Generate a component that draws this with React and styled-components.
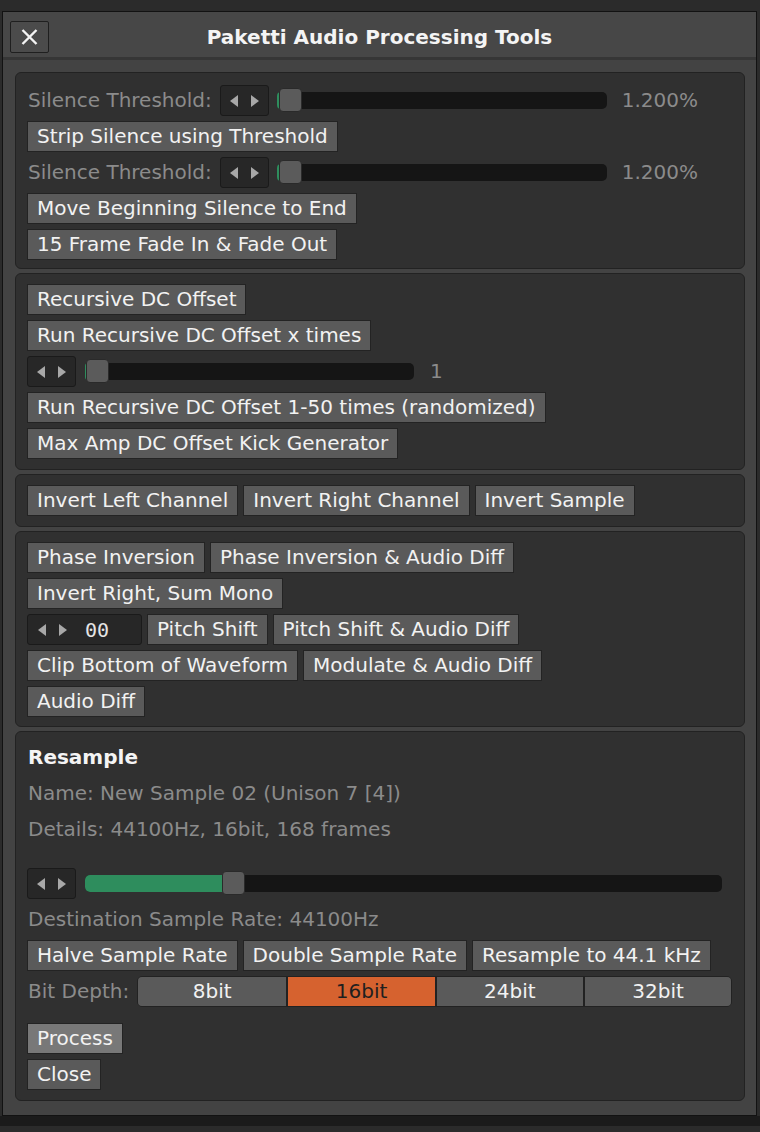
import React from "react";
import styled, { createGlobalStyle } from "styled-components";

const GlobalStyle = createGlobalStyle`
  body {
    margin: 0;
    background: #2b2b2b;
    font-family: "DejaVu Sans", "Liberation Sans", sans-serif;
  }
`;

const Page = styled.div`
  width: 760px;
  height: 1132px;
  padding-top: 11px;
  box-sizing: border-box;
  overflow: hidden;
`;

const Window = styled.div`
  width: 755px;
  margin-left: 2px;
  box-sizing: border-box;
  border: 1px solid #121212;
  background: #434343;
`;

const BottomShade = styled.div`
  height: 10px;
  background: #1b1b1b;
`;

const TitleBar = styled.div`
  height: 48px;
  box-sizing: border-box;
  display: grid;
  grid-template-columns: 1fr auto 1fr;
  align-items: center;
  padding: 4px 7px 0;
  background: #474747;
  border-bottom: 3px solid #363636;
`;

const CloseX = styled.button`
  width: 39px;
  height: 32px;
  padding: 0;
  display: flex;
  align-items: center;
  justify-content: center;
  background: #4b4b4b;
  border: 1px solid #1f1f1f;
  border-radius: 2px;
`;

const Title = styled.div`
  font-size: 20px;
  font-weight: bold;
  color: #f4f4f4;
  white-space: nowrap;
`;

const Body = styled.div`
  display: flex;
  flex-direction: column;
  gap: 4px;
  padding: 12px 11px 14px 12px;
`;

const Panel = styled.div`
  display: flex;
  flex-direction: column;
  align-items: flex-start;
  gap: 5px;
  padding: ${(p) => p.$pad || "10px 11px"};
  background: #303030;
  border: 1px solid #222222;
  border-radius: 6px;
`;

const Row = styled.div`
  display: flex;
  align-items: center;
  gap: ${(p) => p.$gap || 5}px;
`;

const Button = styled.button`
  height: 31px;
  box-sizing: border-box;
  padding: 0 9px;
  font-family: "DejaVu Sans", "Liberation Sans", sans-serif;
  font-size: 20px;
  line-height: 29px;
  color: #f2f2f2;
  white-space: nowrap;
  background: ${(p) => (p.$light ? "#787878" : "#5a5a5a")};
  border: 1px solid #232323;
  border-radius: 0;
`;

const Label = styled.div`
  height: 31px;
  line-height: 31px;
  padding-left: 1px;
  font-size: 20px;
  color: #8b8b8b;
  white-space: nowrap;
`;

const Heading = styled(Label)`
  font-weight: bold;
  color: #f4f4f4;
`;

const Spacer = styled.div`
  height: ${(p) => p.$h}px;
`;

const ValueBox = styled.div`
  width: ${(p) => p.$w}px;
  height: 31px;
  box-sizing: border-box;
  display: flex;
  align-items: center;
  gap: 18px;
  padding-left: ${(p) => (p.$w > 60 ? 10 : 9)}px;
  background: #272727;
  border: 1px solid #1a1a1a;
  border-radius: 3px;
`;

const Number = styled.span`
  font-family: "DejaVu Sans Mono", "Liberation Mono", monospace;
  font-size: 20px;
  color: #e4e4e4;
`;

const Track = styled.div`
  position: relative;
  width: ${(p) => p.$w}px;
  height: 17px;
  background: #151515;
  border-radius: 5px;
`;

const Fill = styled.div`
  position: absolute;
  left: 0;
  top: 0;
  bottom: 0;
  background: #2e8d5d;
  border-radius: 5px 0 0 5px;
`;

const Thumb = styled.div`
  position: absolute;
  top: -4px;
  width: 23px;
  height: 24px;
  box-sizing: border-box;
  background: #5b5b5b;
  border: 1px solid #2a2a2a;
  border-radius: 4px;
`;

const Value = styled(Label)`
  margin-left: 6px;
`;

const Switch = styled.div`
  display: grid;
  grid-template-columns: repeat(4, 1fr);
  width: 595px;
  height: 31px;
  box-sizing: border-box;
  border: 1px solid #222222;
  border-radius: 5px;
  overflow: hidden;
`;

const Segment = styled.div`
  text-align: center;
  font-size: 20px;
  line-height: 29px;
  color: ${(p) => (p.$on ? "#1f1f1f" : "#f2f2f2")};
  background: ${(p) => (p.$on ? "#d6622f" : "#5a5a5a")};
  border-left: ${(p) => (p.$first ? "none" : "2px solid #222222")};
`;

function Arrows() {
  return (
    <svg width="29" height="12" viewBox="0 0 29 12">
      <polygon points="8,0 0,6 8,12" fill="#a8a8a8" />
      <polygon points="21,0 29,6 21,12" fill="#a8a8a8" />
    </svg>
  );
}

function Slider({ width, pos, fill }) {
  return (
    <Track $w={width}>
      <Fill style={{ width: fill }} />
      <Thumb style={{ left: pos }} />
    </Track>
  );
}

export default function App() {
  const bits = ["8bit", "16bit", "24bit", "32bit"];
  return (
    <>
      <GlobalStyle />
      <Page>
        <Window>
          <TitleBar>
            <div>
              <CloseX>
                <svg width="17" height="16" viewBox="0 0 17 16">
                  <path d="M1.5 1 L15.5 15 M15.5 1 L1.5 15" stroke="#f4f4f4" strokeWidth="2.4" />
                </svg>
              </CloseX>
            </div>
            <Title>Paketti Audio Processing Tools</Title>
            <div />
          </TitleBar>
          <Body>
            <Panel $pad="12px 11px 8px">
              <Row $gap={8}>
                <Label>Silence Threshold:</Label>
                <ValueBox $w={49}><Arrows /></ValueBox>
                <Slider width={330} pos={2} fill={4} />
                <Value>1.200%</Value>
              </Row>
              <Button>Strip Silence using Threshold</Button>
              <Row $gap={8}>
                <Label>Silence Threshold:</Label>
                <ValueBox $w={49}><Arrows /></ValueBox>
                <Slider width={330} pos={2} fill={4} />
                <Value>1.200%</Value>
              </Row>
              <Button>Move Beginning Silence to End</Button>
              <Button>15 Frame Fade In &amp; Fade Out</Button>
            </Panel>

            <Panel>
              <Button>Recursive DC Offset</Button>
              <Button>Run Recursive DC Offset x times</Button>
              <Row $gap={9}>
                <ValueBox $w={49}><Arrows /></ValueBox>
                <Slider width={329} pos={1} fill={3} />
                <Value>1</Value>
              </Row>
              <Button>Run Recursive DC Offset 1-50 times (randomized)</Button>
              <Button>Max Amp DC Offset Kick Generator</Button>
            </Panel>

            <Panel>
              <Row>
                <Button>Invert Left Channel</Button>
                <Button>Invert Right Channel</Button>
                <Button>Invert Sample</Button>
              </Row>
            </Panel>

            <Panel $pad="10px 11px 9px">
              <Row>
                <Button>Phase Inversion</Button>
                <Button>Phase Inversion &amp; Audio Diff</Button>
              </Row>
              <Button>Invert Right, Sum Mono</Button>
              <Row>
                <ValueBox $w={115}>
                  <Arrows />
                  <Number>00</Number>
                </ValueBox>
                <Button>Pitch Shift</Button>
                <Button>Pitch Shift &amp; Audio Diff</Button>
              </Row>
              <Row>
                <Button>Clip Bottom of Waveform</Button>
                <Button>Modulate &amp; Audio Diff</Button>
              </Row>
              <Button>Audio Diff</Button>
            </Panel>

            <Panel>
              <Heading>Resample</Heading>
              <Label>Name: New Sample 02 (Unison 7 [4])</Label>
              <Label>Details: 44100Hz, 16bit, 168 frames</Label>
              <Spacer $h={13} />
              <Row $gap={9}>
                <ValueBox $w={49}><Arrows /></ValueBox>
                <Slider width={637} pos={137} fill={143} />
              </Row>
              <Label>Destination Sample Rate: 44100Hz</Label>
              <Row>
                <Button>Halve Sample Rate</Button>
                <Button>Double Sample Rate</Button>
                <Button>Resample to 44.1 kHz</Button>
              </Row>
              <Row $gap={8}>
                <Label>Bit Depth:</Label>
                <Switch>
                  {bits.map((b, i) => (
                    <Segment key={b} $first={i === 0} $on={b === "16bit"}>
                      {b}
                    </Segment>
                  ))}
                </Switch>
              </Row>
              <Spacer $h={6} />
              <Button $light>Process</Button>
              <Button>Close</Button>
            </Panel>
          </Body>
        </Window>
        <BottomShade />
      </Page>
    </>
  );
}
